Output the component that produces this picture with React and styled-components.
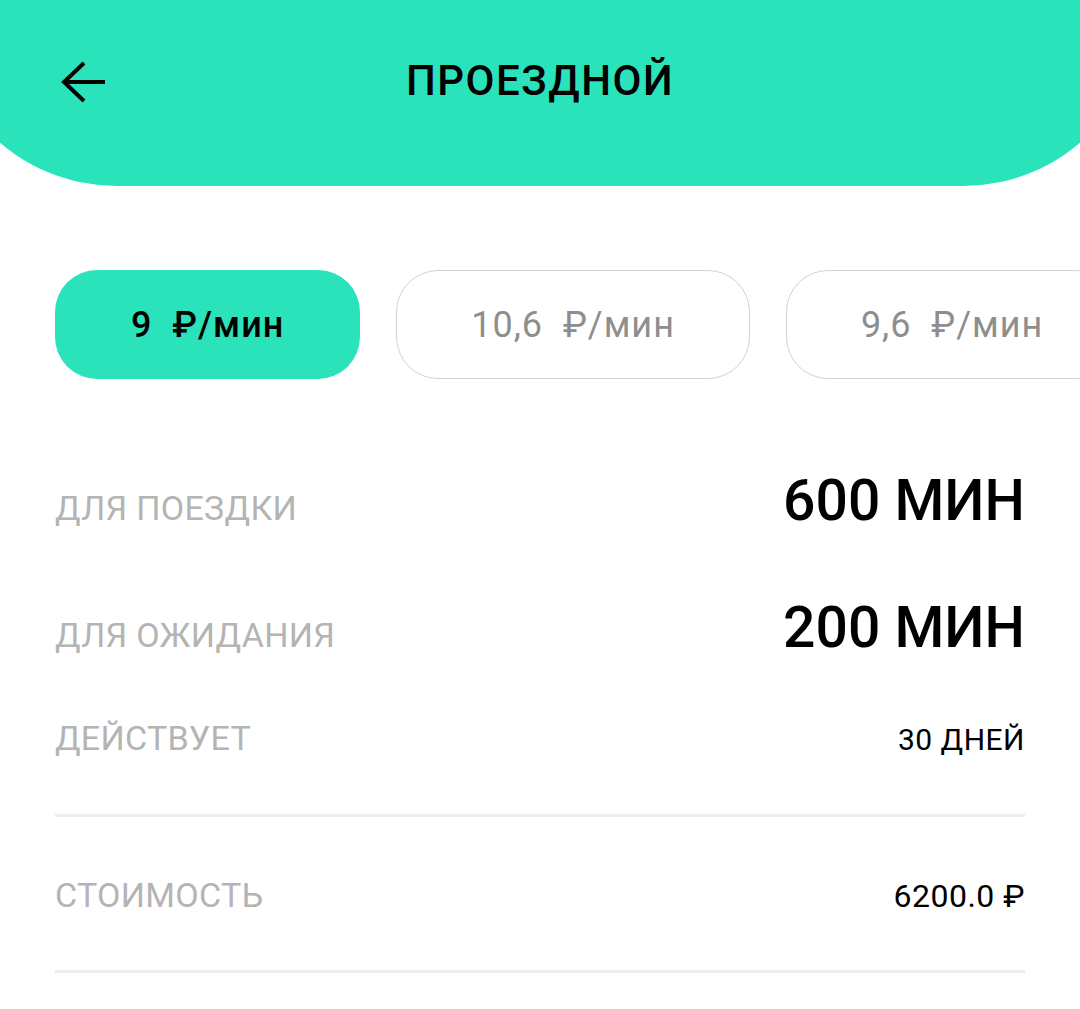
import React from 'react';
import styled, { createGlobalStyle } from 'styled-components';

const teal = '#2be3bb';

const GlobalStyle = createGlobalStyle`
  html, body {
    margin: 0;
    padding: 0;
    background: #fff;
    overflow-x: hidden;
    font-family: Roboto, "Noto Sans", "DejaVu Sans", sans-serif;
  }
`;

const Page = styled.div`
  width: 1080px;
  min-height: 1009px;
  overflow: hidden;
`;

const Header = styled.header`
  box-sizing: border-box;
  height: 186px;
  margin: 0 -63px;
  padding: 60px 63px 0;
  background: ${teal};
  border-radius: 0 0 180px 180px;
`;

const Bar = styled.div`
  display: grid;
  grid-template-columns: 1fr auto 1fr;
  align-items: start;
`;

const BackButton = styled.button`
  justify-self: start;
  margin-left: 59px;
  padding: 0;
  border: none;
  background: none;
  width: 48px;
  height: 44px;
  cursor: pointer;
  svg {
    display: block;
  }
`;

const Title = styled.h1`
  margin: 0;
  font-size: 42px;
  line-height: 1;
  font-weight: 500;
  color: #000;
  letter-spacing: 1.5px;
`;

const Content = styled.main`
  padding: 0 55px;
`;

const ChipRow = styled.div`
  display: flex;
  gap: 36px;
  margin-top: 84px;
  margin-right: -55px;
`;

const Chip = styled.button`
  flex: none;
  box-sizing: border-box;
  height: 109px;
  padding: 0 ${(p) => (p.active ? 76 : 74)}px;
  border-radius: 42px;
  border: ${(p) => (p.active ? 'none' : '1.5px solid #d2d2d2')};
  background: ${(p) => (p.active ? teal : '#fff')};
  color: ${(p) => (p.active ? '#000' : '#8e8e8e')};
  font-family: inherit;
  font-size: 36px;
  font-weight: ${(p) => (p.active ? 500 : 400)};
  letter-spacing: 1px;
  white-space: pre;
`;

const Row = styled.div`
  display: flex;
  justify-content: space-between;
  align-items: baseline;
  margin-top: ${(p) => p.top}px;
`;

const Label = styled.span`
  font-size: 34px;
  line-height: 1;
  color: #b4b4b4;
  letter-spacing: 0.3px;
`;

const Value = styled.span`
  font-size: ${(p) => p.size}px;
  line-height: 1;
  font-weight: ${(p) => (p.size > 40 ? 500 : 400)};
  color: #000;
  letter-spacing: ${(p) => (p.size > 40 ? 0 : 0.5)}px;
`;

const Divider = styled.hr`
  margin: ${(p) => p.top}px 0 0;
  border: none;
  height: 3px;
  background: #eeeeee;
`;

const plans = ['9  ₽/мин', '10,6  ₽/мин', '9,6  ₽/мин'];

export default function App() {
  return (
    <Page>
      <GlobalStyle />
      <Header>
        <Bar>
          <BackButton aria-label="Назад">
            <svg width="48" height="44" viewBox="0 0 48 44" fill="none" stroke="#000" strokeWidth="4">
              <path d="M4 22H46" />
              <path d="M25 3L5 22L25 41" />
            </svg>
          </BackButton>
          <Title>ПРОЕЗДНОЙ</Title>
          <div />
        </Bar>
      </Header>
      <Content>
        <ChipRow>
          {plans.map((p, i) => (
            <Chip key={p} active={i === 0}>{p}</Chip>
          ))}
        </ChipRow>
        <Row top={93}>
          <Label>ДЛЯ ПОЕЗДКИ</Label>
          <Value size={57}>600 МИН</Value>
        </Row>
        <Row top={70}>
          <Label>ДЛЯ ОЖИДАНИЯ</Label>
          <Value size={57}>200 МИН</Value>
        </Row>
        <Row top={65}>
          <Label>ДЕЙСТВУЕТ</Label>
          <Value size={30}>30 ДНЕЙ</Value>
        </Row>
        <Divider top={59} />
        <Row top={61}>
          <Label>СТОИМОСТЬ</Label>
          <Value size={32}>6200.0 ₽</Value>
        </Row>
        <Divider top={58} />
      </Content>
    </Page>
  );
}
